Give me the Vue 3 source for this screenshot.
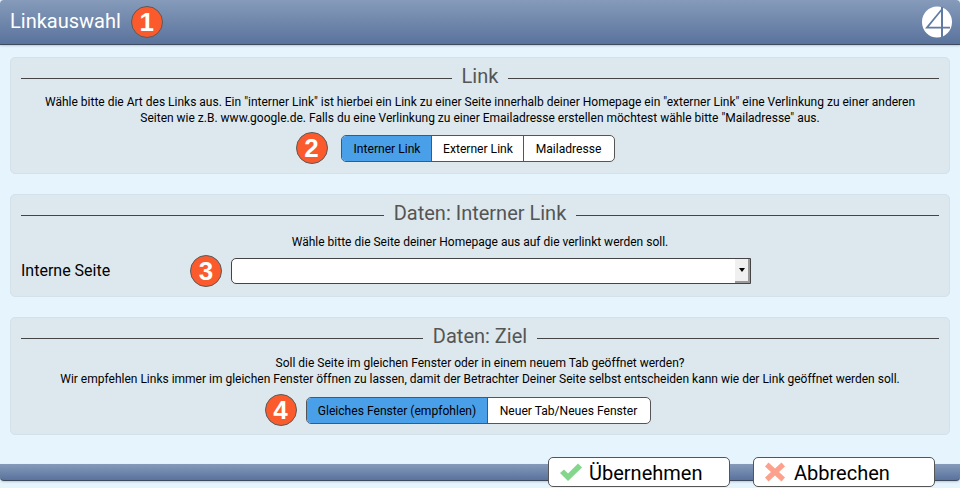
<script setup>
</script>

<template>
  <div class="page">
    <header class="top">
      <span class="title">Linkauswahl</span>
      <span class="num">1</span>
      <svg class="logo" width="30" height="32" viewBox="0 0 30 32">
        <ellipse cx="15" cy="16" rx="15" ry="15.5" fill="#fff" />
        <path d="M20.8 1 L3 22.5 H28 V20.8 H21 V1 H19 V20.8 H6.8 L20.8 3.5 Z" fill="#5f7aa3" />
        <path d="M19 22 H21 V31.5 H19 Z" fill="#5f7aa3" />
      </svg>
    </header>

    <main class="content">
      <section class="panel p1">
        <div class="legend"><span>Link</span></div>
        <p class="text">Wähle bitte die Art des Links aus. Ein "interner Link" ist hierbei ein Link zu einer Seite innerhalb deiner Homepage ein "externer Link" eine Verlinkung zu einer anderen<br>Seiten wie z.B. www.google.de. Falls du eine Verlinkung zu einer Emailadresse erstellen möchtest wähle bitte "Mailadresse" aus.</p>
        <div class="choice c1">
          <span class="num">2</span>
          <div class="seg">
            <span class="on w1">Interner Link</span>
            <span class="w2">Externer Link</span>
            <span class="w3">Mailadresse</span>
          </div>
        </div>
      </section>

      <section class="panel p2">
        <div class="legend"><span>Daten: Interner Link</span></div>
        <p class="text t2">Wähle bitte die Seite deiner Homepage aus auf die verlinkt werden soll.</p>
        <div class="field">
          <label class="label">Interne Seite</label>
          <span class="num">3</span>
          <div class="select">
            <span class="arrow"><i></i></span>
          </div>
        </div>
      </section>

      <section class="panel p3">
        <div class="legend"><span>Daten: Ziel</span></div>
        <p class="text t3">Soll die Seite im gleichen Fenster oder in einem neuem Tab geöffnet werden?<br>Wir empfehlen Links immer im gleichen Fenster öffnen zu lassen, damit der Betrachter Deiner Seite selbst entscheiden kann wie der Link geöffnet werden soll.</p>
        <div class="choice c3">
          <span class="num">4</span>
          <div class="seg">
            <span class="on w4">Gleiches Fenster (empfohlen)</span>
            <span class="w5">Neuer Tab/Neues Fenster</span>
          </div>
        </div>
      </section>
    </main>

    <footer class="bottom">
      <button class="btn b1">
        <svg width="24" height="20" viewBox="0 0 24 20"><path d="M1 11 L5 7.5 L9 11.5 L19 1.5 L23 5.5 L9 19 Z" fill="#83d68c" /></svg>
        <span>Übernehmen</span>
      </button>
      <button class="btn b2">
        <svg width="22" height="20" viewBox="0 0 22 20"><path d="M4.5 0.5 L11 6.5 L17.5 0.5 L21 4.5 L15 10 L21 15.5 L17.5 19.5 L11 13.5 L4.5 19.5 L1 15.5 L7 10 L1 4.5 Z" fill="#fda18c" /></svg>
        <span>Abbrechen</span>
      </button>
    </footer>
  </div>
</template>

<style scoped>
.page {
  width: 960px;
  height: 488px;
  overflow: hidden;
  background: #e6f4fd;
  font-family: Roboto, "Liberation Sans", sans-serif;
  color: #000;
}
.top {
  height: 45px;
  box-sizing: border-box;
  display: flex;
  align-items: center;
  padding: 0 8px 0 10px;
  background: linear-gradient(#869bba, #5a739d);
  border-bottom: 1px solid #3f4a5c;
  border-radius: 4px 4px 0 0;
  box-shadow: 0 1px 2px rgba(60, 70, 90, .25);
}
.title {
  color: #fff;
  font-size: 20px;
  margin-right: 10px;
  padding-bottom: 2px;
}
.num {
  width: 32px;
  height: 32px;
  box-sizing: border-box;
  flex: none;
  display: flex;
  align-items: center;
  justify-content: center;
  border-radius: 50%;
  background: #fa5a2c;
  border: 1px solid #5a5a5a;
  color: #fff;
  font-family: "Liberation Sans", sans-serif;
  font-weight: 700;
  font-size: 26px;
  line-height: 1;
}
.logo {
  margin-left: auto;
  flex: none;
}
.content {
  padding: 12px 10px 0;
  display: flex;
  flex-direction: column;
  gap: 20px;
}
.panel {
  box-sizing: border-box;
  background: #dce8ee;
  border: 1px solid #d4e1ea;
  border-radius: 5px;
  padding: 8px 10px 0;
}
.p1 { height: 117px; }
.p2 { height: 103px; }
.p3 { height: 118px; }
.legend {
  display: flex;
  align-items: center;
  gap: 10px;
  height: 24px;
  font-size: 20px;
  color: #555;
}
.legend span {
  padding-bottom: 4px;
}
.legend::before,
.legend::after {
  content: "";
  flex: 1;
  height: 1px;
  background: #444;
}
.text {
  margin: 4px 0 0;
  font-size: 12px;
  line-height: 16px;
  text-align: center;
  color: #000;
}
.t2 { margin-top: 7px; }
.t3 { margin-top: 5px; }
.choice {
  display: flex;
  align-items: center;
  justify-content: center;
  margin-top: 6px;
}
.c1 { gap: 13px; margin-left: -50px; }
.c3 { gap: 9px; margin-left: -45px; margin-top: 7px; }
.seg {
  display: flex;
  height: 27px;
  margin-top: 1px;
  box-sizing: border-box;
  border: 1px solid #555;
  border-radius: 5px;
  background: #fff;
  overflow: hidden;
  font-size: 12.1px;
}
.seg span {
  display: flex;
  align-items: center;
  justify-content: center;
  box-sizing: border-box;
  border-left: 1px solid #555;
}
.seg span:first-child { border-left: 0; }
.seg .on { background: #4a9fe9; }
.w1 { width: 89px; padding-left: 2px; }
.w2 { width: 92px; padding-left: 2px; }
.w3 { width: 91px; }
.w4 { width: 180px; padding-left: 1px; }
.w5 { width: 163px; }
.field {
  display: flex;
  align-items: center;
  margin-top: 6px;
  height: 30px;
}
.label {
  width: 169px;
  font-size: 16px;
  flex: none;
  padding-bottom: 2px;
}
.select {
  margin-left: 9px;
  width: 520px;
  height: 26px;
  box-sizing: border-box;
  border: 1px solid #444;
  border-radius: 5px 0 0 5px;
  background: #fff;
  display: flex;
  justify-content: flex-end;
}
.arrow {
  width: 15px;
  display: flex;
  align-items: center;
  justify-content: center;
  background: #f0f0f0;
  border-right: 2px solid #9a9a9a;
  border-bottom: 2px solid #9a9a9a;
  box-sizing: border-box;
}
.arrow i {
  width: 0;
  height: 0;
  border-left: 3px solid transparent;
  border-right: 3px solid transparent;
  border-top: 4px solid #000;
}
.bottom {
  margin-top: 29px;
  height: 16px;
  background: linear-gradient(#869bba, #5a739d);
  border-bottom: 1px solid #3f4a5c;
  border-radius: 0 0 4px 4px;
  box-shadow: 0 1px 2px rgba(60, 70, 90, .25);
  display: flex;
  align-items: center;
  padding-left: 548px;
}
.btn {
  width: 182px;
  height: 30px;
  flex: none;
  box-sizing: border-box;
  border: 1px solid #555;
  border-radius: 5px;
  background: #fff;
  padding: 0 0 0 10px;
  display: flex;
  align-items: center;
  font-family: Roboto, "Liberation Sans", sans-serif;
  font-size: 20px;
  color: #000;
}
.btn span { padding-top: 2px; }
.b1 { gap: 6px; }
.b2 { margin-left: 23px; gap: 8px; }
</style>
